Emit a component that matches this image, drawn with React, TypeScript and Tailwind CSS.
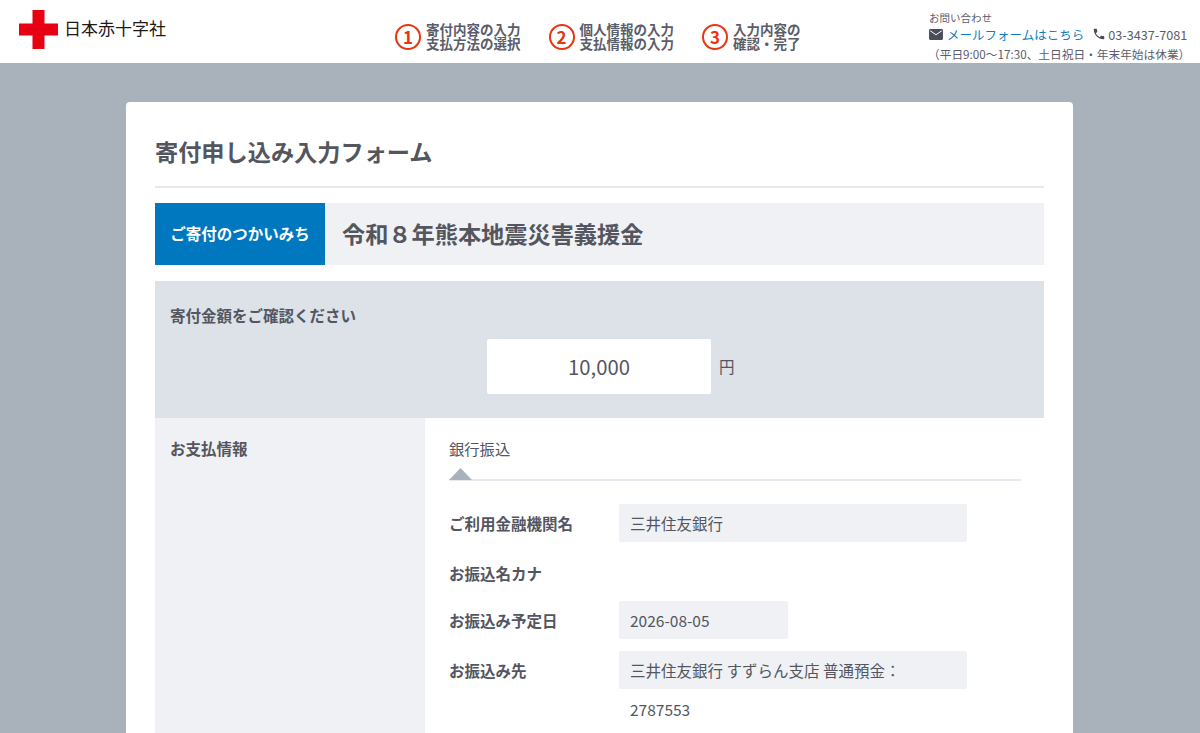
import React from "react";

const font = { fontFamily: '"Noto Sans CJK JP", sans-serif' };

function Step({ n, a, b }: { n: string; a: string; b: string }) {
  return (
    <div className="flex items-center gap-[5px]">
      <div className="flex h-[26px] w-[26px] items-center justify-center rounded-full border-2 border-[#e8340f] text-[17px] leading-none font-bold text-[#e8340f]">{n}</div>
      <div className="text-[13.5px] leading-[13.5px] font-bold whitespace-nowrap text-[#5b5d6b]">
        {a}
        <br />
        {b}
      </div>
    </div>
  );
}

function Field({ label, children, className }: { label: string; children?: React.ReactNode; className?: string }) {
  return (
    <div className={`flex items-start ${className ?? ""}`}>
      <div className="h-[38px] w-[170px] shrink-0 text-[15.5px] leading-[38px] font-bold text-[#54565f]">{label}</div>
      {children}
    </div>
  );
}

export default function App() {
  return (
    <div style={font} className="h-[733px] w-[1200px] overflow-hidden bg-[#a9b1bb] text-[#54565f]">
      <header className="flex h-[63px] bg-white">
        <div className="flex w-[395px] shrink-0 items-start pt-[10px] pl-[19px]">
          <svg width="39" height="39" viewBox="0 0 39 39" className="shrink-0">
            <path d="M13.500 0h12v13.500H39v12H25.500V39h-12V25.500H0v-12h13.500z" fill="#e60012" />
          </svg>
          <span className="mt-[7px] ml-[6px] text-[17px] leading-[22px] whitespace-nowrap text-[#231815]">日本赤十字社</span>
        </div>
        <div className="flex w-[534px] shrink-0 items-start gap-[28px] pt-[23px]">
          <Step n="1" a="寄付内容の入力" b="支払方法の選択" />
          <Step n="2" a="個人情報の入力" b="支払情報の入力" />
          <Step n="3" a="入力内容の" b="確認・完了" />
        </div>
        <div className="flex-1 pt-[11px] text-[#5b5d6b]">
          <div className="text-[10.500px] leading-[14px]">お問い合わせ</div>
          <div className="-mt-[0.5px] flex items-center text-[12.500px] leading-[19px]">
            <svg width="14" height="11" viewBox="0 0 24 19" fill="#4a4c5a" className="mr-[4px]">
              <path d="M2 0h20a2 2 0 0 1 2 2v15a2 2 0 0 1-2 2H2a2 2 0 0 1-2-2V2a2 2 0 0 1 2-2zm10 11l10-7V2L12 9 2 2v2z" fillRule="evenodd" />
            </svg>
            <span className="whitespace-nowrap text-[#0f7fc0]">メールフォームはこちら</span>
            <svg width="14" height="14" viewBox="0 0 24 24" fill="#4a4c5a" className="mr-[2px] ml-[8px]">
              <path d="M6.600 10.800c1.400 2.800 3.800 5.100 6.600 6.600l2.200-2.200c.3-.3.700-.4 1-.2 1.100.4 2.300.6 3.600.6.600 0 1 .4 1 1V20c0 .6-.4 1-1 1C10.600 21 3 13.400 3 4c0-.6.4-1 1-1h3.500c.6 0 1 .4 1 1 0 1.300.2 2.500.6 3.600.1.300 0 .7-.2 1z" />
            </svg>
            <span className="text-[12.700px]">03-3437-7081</span>
          </div>
          <div className="mt-[2px] -ml-[1px] text-[11.700px] leading-[15px] whitespace-nowrap">（平日9:00～17:30、土日祝日・年末年始は休業）</div>
        </div>
      </header>

      <main className="mt-[39px] ml-[126px] w-[947px] rounded-[4px] bg-white px-[29px]">
        <h1 className="flex h-[86px] items-center border-b-2 border-[#e8e9ee] pt-[15px] text-[23.200px] font-bold text-[#54565f]">寄付申し込み入力フォーム</h1>

        <div className="mt-[15px] flex h-[62px] items-stretch bg-[#eff1f5]">
          <div className="flex w-[170px] items-center justify-center bg-[#0078bf] pb-[1px] text-[15.500px] font-bold text-white">ご寄付のつかいみち</div>
          <div className="flex items-center pb-[2px] pl-[17px] text-[23.200px] font-bold text-[#54565f]">令和８年熊本地震災害義援金</div>
        </div>

        <section className="mt-[16px] h-[137px] bg-[#dde1e8] pt-[23px]">
          <div className="pl-[15px] text-[15.500px] leading-[22px] font-bold">寄付金額をご確認ください</div>
          <div className="mt-[13px] flex items-center pl-[332px]">
            <div className="flex h-[55px] w-[224px] items-center justify-center rounded-[2px] bg-white text-[20.300px]">10,000</div>
            <span className="ml-[8px] text-[15.500px]">円</span>
          </div>
        </section>

        <section className="flex h-[400px]">
          <div className="w-[270px] shrink-0 bg-[#eff1f5] pt-[19px] pl-[15px] text-[15.500px] leading-[22px] font-bold">お支払情報</div>
          <div className="flex-1 pt-[20px] pl-[24px]">
            <div className="w-[572px] border-b-2 border-[#e8e9ee]">
              <div className="text-[15.300px] leading-[21px]">銀行振込</div>
              <svg width="23" height="12" viewBox="0 0 23 12" className="mt-[9px] -mb-px block">
                <path d="M11.500 0L23 12H0z" fill="#a9b1bb" />
              </svg>
            </div>
            <div className="mt-[23px] text-[15.500px]">
              <Field label="ご利用金融機関名">
                <div className="h-[38px] w-[348px] rounded-[2px] bg-[#eff1f5] pl-[11px] leading-[38px]">三井住友銀行</div>
              </Field>
              <Field label="お振込名カナ" className="mt-[12px]" />
              <Field label="お振込み予定日" className="mt-[9px]">
                <div className="h-[38px] w-[169px] rounded-[2px] bg-[#eff1f5] pl-[11px] leading-[38px]">2026-08-05</div>
              </Field>
              <Field label="お振込み先" className="mt-[12px]">
                <div className="w-[348px] leading-[38px]">
                  <div className="h-[38px] rounded-[2px] bg-[#eff1f5] pl-[11px] whitespace-nowrap">三井住友銀行 すずらん支店 普通預金：</div>
                  <div className="mt-[1px] pl-[11px]">2787553</div>
                </div>
              </Field>
            </div>
          </div>
        </section>
      </main>
    </div>
  );
}
